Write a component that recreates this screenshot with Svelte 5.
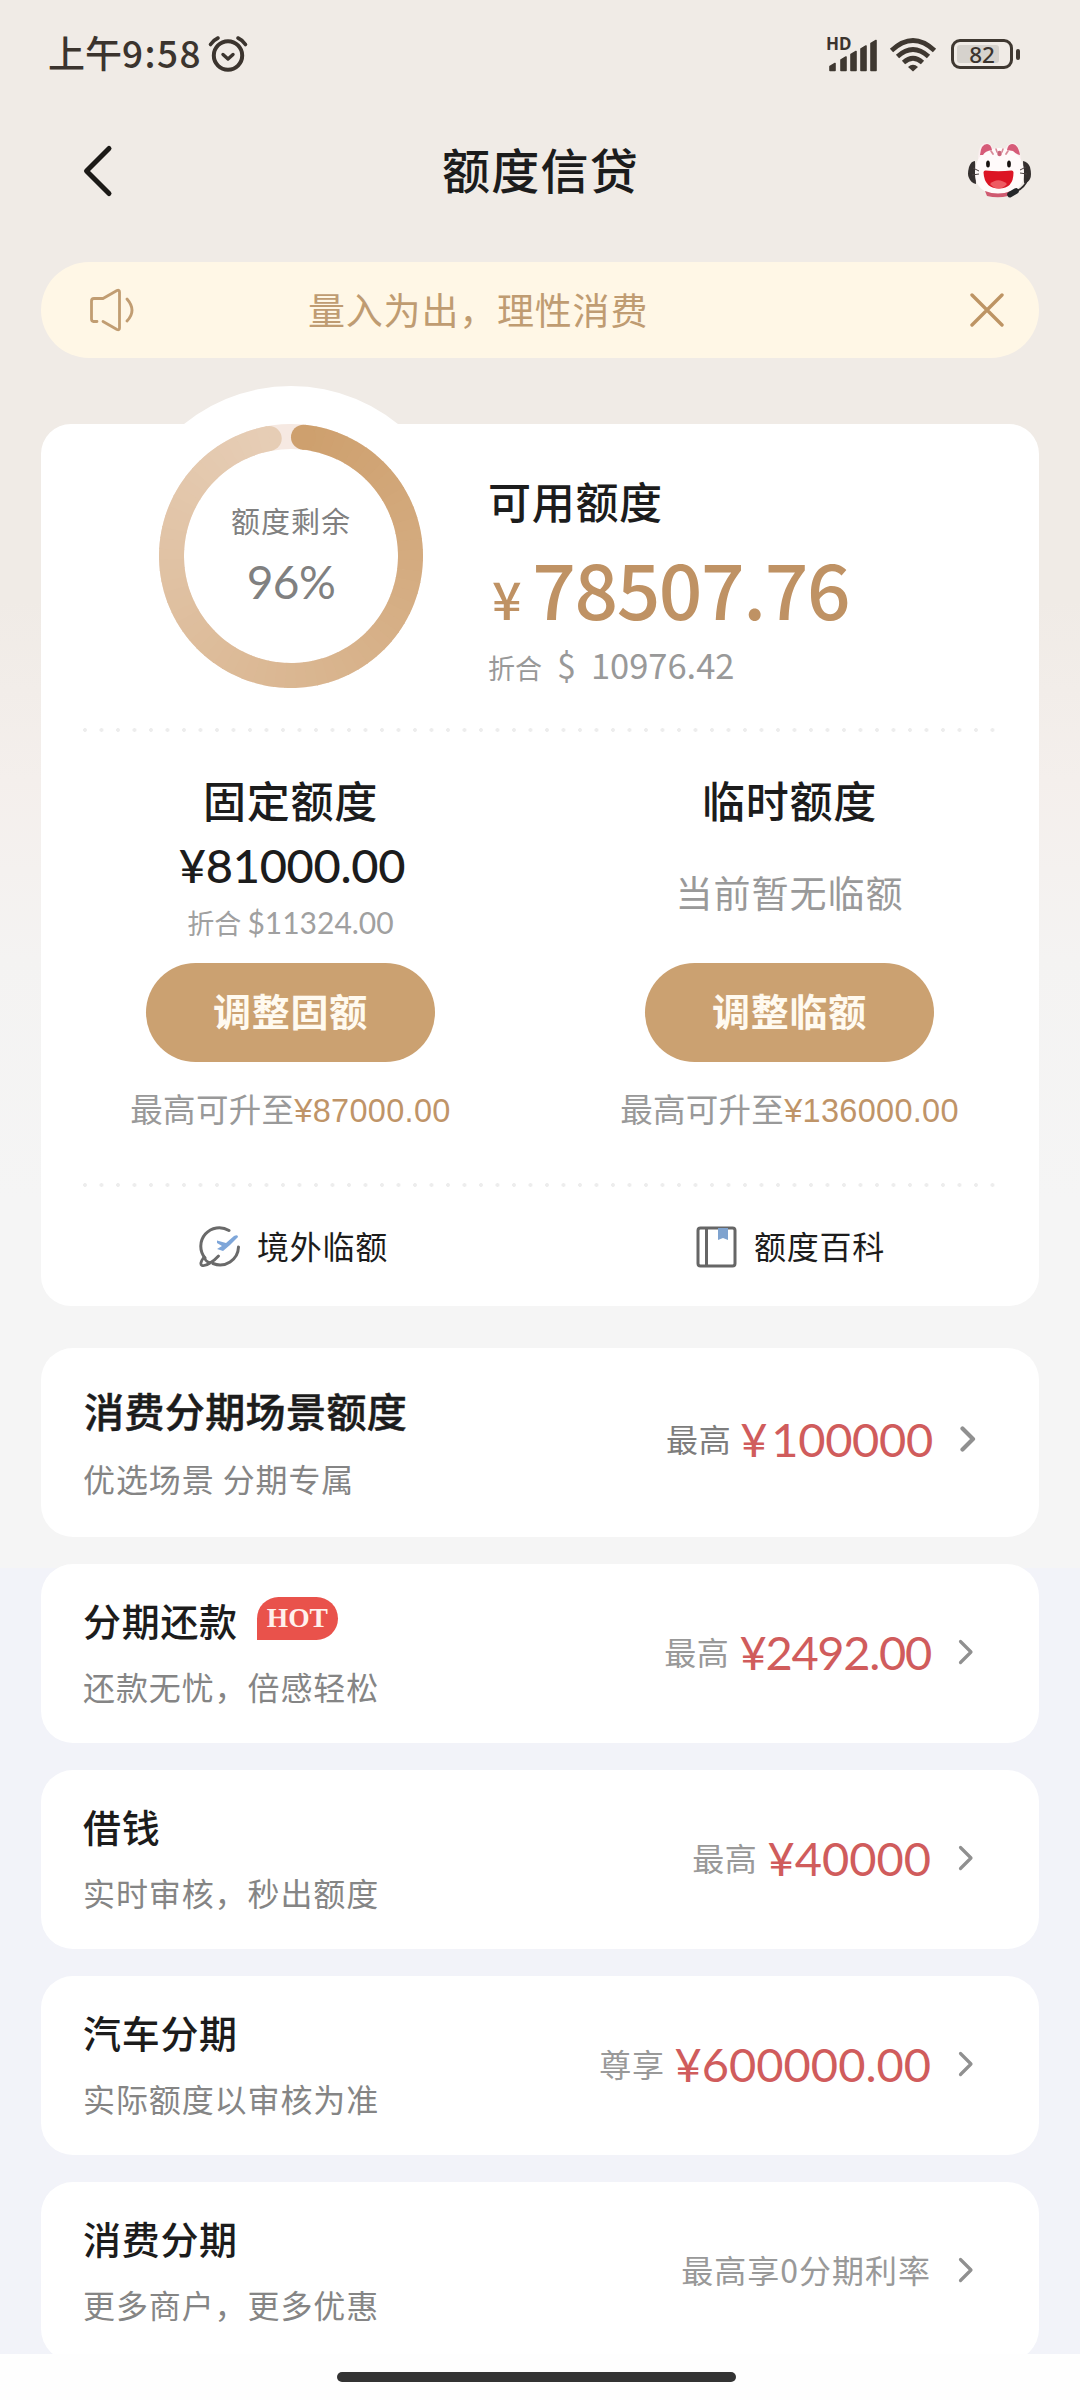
<script lang="ts">
	type Offer = {
		title: string;
		subtitle: string;
		prefix?: string;
		sign?: string;
		amount?: string;
		note?: string;
		hot?: boolean;
		featured?: boolean;
	};

	const offers: Offer[] = [
		{ title: "消费分期场景额度", subtitle: "优选场景 分期专属", prefix: "最高", sign: "¥", amount: "100000", featured: true },
		{ title: "分期还款", subtitle: "还款无忧，倍感轻松", prefix: "最高", sign: "¥", amount: "2492.00", hot: true },
		{ title: "借钱", subtitle: "实时审核，秒出额度", prefix: "最高", sign: "¥", amount: "40000" },
		{ title: "汽车分期", subtitle: "实际额度以审核为准", prefix: "尊享", sign: "¥", amount: "600000.00" },
		{ title: "消费分期", subtitle: "更多商户，更多优惠", note: "最高享0分期利率" },
	];

	const remaining = 96;

	// ring geometry, in degrees clockwise from 12 o'clock
	const CENTER = 132;
	const RADIUS = 119.5;
	const START = 6;
	const END = 349.5;
	const STEPS = 72;
	const FROM = [206, 160, 110];
	const TO = [230, 205, 181];

	function point(angle: number) {
		const rad = (angle * Math.PI) / 180;
		return { x: CENTER + RADIUS * Math.sin(rad), y: CENTER - RADIUS * Math.cos(rad) };
	}

	function shade(t: number): string {
		return `rgb(${FROM.map((c, i) => Math.round(c + (TO[i] - c) * t)).join(",")})`;
	}

	const segments = Array.from({ length: STEPS }, (_, i) => {
		const a = point(START + ((END - START) * i) / STEPS);
		const b = point(Math.min(END, START + ((END - START) * (i + 1)) / STEPS + 0.4));
		return {
			d: `M${a.x.toFixed(2)} ${a.y.toFixed(2)}A${RADIUS} ${RADIUS} 0 0 1 ${b.x.toFixed(2)} ${b.y.toFixed(2)}`,
			color: shade(i / (STEPS - 1)),
		};
	});
	const head = point(START);
	const tail = point(END);
</script>

<div class="screen">
	<header class="status">
		<div class="status-left">
			<span class="clock">上午<span class="time">9:58</span></span>
			<svg class="alarm" width="40" height="38" viewBox="0 0 40 38" fill="none" stroke="#3b342e" stroke-width="4" stroke-linecap="round" stroke-linejoin="round">
				<circle cx="20" cy="20.5" r="14.2" />
				<path d="M15 19.5l5 4.5 5-4.5" stroke-width="3.4" />
				<path d="M2.5 9.5q3-4.5 7.500-6.500M37.500 9.500q-3-4.500-7.500-6.500" stroke-width="3.600" />
			</svg>
		</div>
		<div class="status-right">
			<div class="signal">
				<span class="hd">HD</span>
				<svg width="50" height="36" viewBox="0 0 50 36" fill="#3f3831">
					<path d="M3 34.500v-4l5-3v7zM14 34.500V24l5-3v13.500zM24 34.500V18.500l5-3v19zM34 34.500V13l5-3v24.500zM44 34.500V7.500l5-3v30z" stroke="#3f3831" stroke-width="1.600" stroke-linejoin="round" />
				</svg>
			</div>
			<svg class="wifi" width="48" height="36" viewBox="0 0 48 36" fill="none" stroke="#3f3831" stroke-width="4.800">
				<path d="M2.500 14.500q21.500-20 43 0" />
				<path d="M8.500 20.500q15.500-14 31 0" />
				<path d="M14.500 26.500q9.500-8.500 19 0" />
				<path d="M24 35.500l-5-4.500q5-4.500 10 0z" fill="#3f3831" stroke="none" />
			</svg>
			<div class="battery">
				<div class="battery-body">
					<div class="battery-level"></div>
					<span>82</span>
				</div>
				<i></i>
			</div>
		</div>
	</header>

	<nav class="nav">
		<button type="button" class="back" aria-label="返回">
			<svg width="32" height="54" viewBox="0 0 32 54" fill="none" stroke="#1c1a17" stroke-width="5" stroke-linecap="round" stroke-linejoin="round">
				<path d="M28 4.500L5.500 27 28 49.500" />
			</svg>
		</button>
		<h1>额度信贷</h1>
		<svg class="mascot" width="64" height="58" viewBox="0 0 64 58">
			<path d="M7 19q-4 0-6 6-2 8 0 11 2 5 7 6zM55 19q5 1 7 6 2 8 0 12-2 4-6 4z" fill="#35302f" />
			<path d="M10 19Q10 1 18 1q6 0 7 7h12q2-7 8-7 7 0 8 18z" fill="#fbeff0" />
			<path d="M31 6C15 7 7 17 7 31c0 14 9 21 24 21s25-7 25-21C56 17 47 6 31 6z" fill="#fffafa" />
			<path d="M12 13q1-11 7-11 4 0 5 6-7 1-9 5zM39 8q1-6 5-6 6 0 8 11-3 0-7-4z" fill="#d65b78" />
			<path d="M23 9l2 3M40 9l-2 3" stroke="#d98c9a" stroke-width="1.800" stroke-linecap="round" />
			<path d="M28 7l1 3M35 7l-1 3" stroke="#d98c9a" stroke-width="1.600" stroke-linecap="round" />
			<ellipse cx="31.5" cy="11.5" rx="2.200" ry="2.800" fill="#c9647a" />
			<path d="M17 49q13 5 26 0l-3 5q-10 2.500-21 0z" fill="#cf5a70" />
			<ellipse cx="20" cy="22" rx="1.900" ry="3.500" fill="#17110f" />
			<ellipse cx="41" cy="22" rx="1.900" ry="3.500" fill="#17110f" />
			<path d="M15.500 30.500q0-2 2-2 13 1.500 26 0 2 0 2 2 0 16-14.500 16t-15.500-16z" fill="#dc1424" />
			<path d="M22 42q8-7.500 17 0-4 4.500-8.500 4.500T22 42z" fill="#ee5b62" />
			<path d="M5 26l6 3M4 33l7-1M58 25l-6 3M59 32l-7-1" stroke="#4a4140" stroke-width="1" />
			<path d="M60 36q-3 10-13 14" fill="none" stroke="#2f2b2c" stroke-width="1.800" />
			<path d="M42 52.500l6-3.500" stroke="#25272a" stroke-width="5.600" stroke-linecap="round" />
		</svg>
	</nav>

	<div class="notice">
		<svg width="46" height="44" viewBox="0 0 46 44" fill="none" stroke="#c19d72" stroke-width="2.800" stroke-linecap="round" stroke-linejoin="round">
			<path d="M8 33.500H4.500Q2.500 33.500 2.500 31V13q0-2.500 2.500-2.500h9L28 2.500q2.500-1 2.500 1.500v36q0 2.500-2.500 1.500L14 33.500" />
			<path d="M38 11q10 11.500 0 22" />
		</svg>
		<p>量入为出，理性消费</p>
		<svg class="close" width="34" height="34" viewBox="0 0 34 34" stroke="#bd9464" stroke-width="3.400" stroke-linecap="round">
			<path d="M2 2l30 30M32 2L2 32" />
		</svg>
	</div>

	<section class="limit-card">
		<div class="overview">
			<div class="gauge">
				<svg width="264" height="264" viewBox="0 0 264 264" fill="none" stroke-width="25">
					<circle cx={CENTER} cy={CENTER} r={RADIUS} stroke="#f6e9e2" />
					<circle cx={tail.x} cy={tail.y} r="12.5" fill={shade(1)} stroke="none" />
					{#each segments as segment}
						<path d={segment.d} stroke={segment.color} />
					{/each}
					<circle cx={head.x} cy={head.y} r="12.5" fill={shade(0)} stroke="none" />
				</svg>
				<div class="gauge-text">
					<span class="gauge-label">额度剩余</span>
					<span class="gauge-value">{remaining}%</span>
				</div>
			</div>
			<div class="available">
				<h2>可用额度</h2>
				<div class="available-amount"><small>¥</small>78507.76</div>
				<div class="available-usd">折合<span class="usd-sign">$</span><span class="usd-value">10976.42</span></div>
			</div>
		</div>

		<div class="dots"></div>

		<div class="columns">
			<div class="column">
				<h2>固定额度</h2>
				<div class="fixed-amount">¥81000.00</div>
				<div class="fixed-usd">折合 <span>$11324.00</span></div>
				<button type="button" class="adjust">调整固额</button>
				<div class="raise">最高可升至<b>¥87000.00</b></div>
			</div>
			<div class="column">
				<h2>临时额度</h2>
				<div class="empty">当前暂无临额</div>
				<button type="button" class="adjust">调整临额</button>
				<div class="raise">最高可升至<b>¥136000.00</b></div>
			</div>
		</div>

		<div class="dots"></div>

		<div class="links">
			<div class="link">
				<svg width="42" height="42" viewBox="0 0 42 42" fill="none" stroke="#6a6a6a" stroke-width="3" stroke-linecap="round" stroke-linejoin="round">
					<path d="M30 4.500A18.500 18.500 0 0 0 6 32M39.500 21A18.500 18.500 0 0 1 14 37.500" />
					<path d="M5 31q-5 7-2 8.500 3 1 8-2.500 5-3 8.500-7M5 31q1 4 6 6" stroke-width="2.800" />
					<path d="M18 14.500l9 2.500 8-7q4-2 4 1l-8 8-7 6-6-2 5-3-5-3z" fill="#7ea6d9" stroke="none" />
				</svg>
				<span>境外临额</span>
			</div>
			<div class="link">
				<svg width="42" height="42" viewBox="0 0 42 42" fill="none" stroke="#666" stroke-width="3">
					<rect x="2" y="2" width="37" height="38" rx="2.500" />
					<path d="M10.500 2v38" />
					<path d="M22 2h10v12l-5-2-5 2z" fill="#7fa3cf" stroke="none" />
				</svg>
				<span>额度百科</span>
			</div>
		</div>
	</section>

	<main class="offers">
		{#each offers as offer}
			<article class="offer" class:featured={offer.featured} class:hot={offer.hot}>
				<div class="offer-info">
					<h3>
						{offer.title}
						{#if offer.hot}<em>HOT</em>{/if}
					</h3>
					<p>{offer.subtitle}</p>
				</div>
				<div class="offer-value">
					{#if offer.amount}
						<span class="prefix">{offer.prefix}</span>
						<strong><span class="sign">{offer.sign}</span>{offer.amount}</strong>
					{:else}
						<span class="note">{offer.note}</span>
					{/if}
					<svg class="chevron" width="16" height="28" viewBox="0 0 16 28" fill="none" stroke-linecap="round" stroke-linejoin="round">
						<path d="M2.500 3.500L13 14 2.500 24.500" />
					</svg>
				</div>
			</article>
		{/each}
	</main>

	<footer class="home"><span></span></footer>
</div>

<style>
	:global(body) {
		margin: 0;
	}

	.screen {
		display: flex;
		flex-direction: column;
		box-sizing: border-box;
		width: 1080px;
		height: 2400px;
		overflow: hidden;
		background: linear-gradient(#f0ebe6 0, #f0ebe6 600px, #f4efec 780px, #f4f3f2 960px, #f5f5f5 1200px, #f5f5f5 1568px, #f2f3f9 1568px);
		font-family: "Noto Sans CJK SC", sans-serif;
		color: #1c1c1c;
	}

	h1,
	h2,
	h3,
	p {
		margin: 0;
		font-weight: 500;
	}

	button {
		padding: 0;
		border: 0;
		background: none;
		font-family: inherit;
	}

	svg {
		display: block;
		flex: none;
	}

	.status {
		display: flex;
		align-items: center;
		justify-content: space-between;
		height: 108px;
		padding: 0 60px 0 48px;
		color: #3b342e;
	}

	.status-left,
	.status-right,
	.battery {
		display: flex;
		align-items: center;
	}

	.clock {
		font-size: 37px;
		font-weight: 500;
		line-height: 50px;
		padding-bottom: 4px;
	}

	.time {
		letter-spacing: 1.4px;
	}

	.alarm {
		margin-left: 6px;
	}

	.signal {
		position: relative;
	}

	.hd {
		position: absolute;
		left: -1px;
		top: -2px;
		font: 700 17px/20px "Noto Sans", sans-serif;
	}

	.wifi {
		margin: 0 14px 0 12px;
	}

	.battery-body {
		display: grid;
		box-sizing: border-box;
		width: 62px;
		height: 30px;
		padding: 3px;
		border: 3px solid #3f3831;
		border-radius: 9px;
	}

	.battery-body > * {
		grid-area: 1 / 1;
	}

	.battery-body span {
		margin-top: -3px;
		height: 26px;
		font: 500 22.500px/26px "Noto Sans", sans-serif;
		text-align: center;
	}

	.battery-level {
		width: 42px;
		height: 18px;
		border-radius: 3px;
		background: #d6d2cd;
	}

	.battery i {
		width: 4px;
		height: 11px;
		margin-left: 3px;
		border-radius: 2px;
		background: #3f3831;
	}

	.nav {
		display: grid;
		grid-template-columns: 1fr auto 1fr;
		align-items: center;
		height: 126px;
		padding: 0 48px 0 81px;
	}

	.back {
		justify-self: start;
	}

	.nav h1 {
		margin: -6px 32px 0 0;
		font-size: 48px;
		line-height: 60px;
		letter-spacing: 1.2px;
	}

	.mascot {
		justify-self: end;
	}

	.notice {
		display: grid;
		grid-template-columns: 80px 1fr 80px;
		align-items: center;
		height: 96px;
		margin: 28px 41px 66px;
		padding: 0 35px 0 48px;
		box-sizing: border-box;
		border-radius: 48px;
		background: #fff7e6;
	}

	.notice p {
		margin: -3px 0 0 139px;
		color: #bf9c72;
		font-size: 37px;
		font-weight: 400;
		line-height: 50px;
		letter-spacing: 0.8px;
	}

	.close {
		justify-self: end;
	}

	.limit-card {
		flex: none;
		display: flex;
		flex-direction: column;
		height: 882px;
		margin: 0 41px 42px;
		border-radius: 30px;
		background: #fff;
	}

	.overview {
		display: flex;
		height: 304px;
	}

	/* white halo that rises over the card's top edge */
	.gauge {
		position: relative;
		box-sizing: border-box;
		width: 340px;
		height: 340px;
		margin: -38px 0 0 80px;
		padding: 38px;
		border-radius: 50%;
		background: #fff;
	}

	.gauge-text {
		position: absolute;
		inset: 0;
		display: flex;
		flex-direction: column;
		align-items: center;
		padding-top: 114px;
		color: #808080;
	}

	.gauge-label {
		font-size: 29px;
		line-height: 40px;
		letter-spacing: 1px;
	}

	.gauge-value {
		margin-top: 14px;
		font-family: Lato, sans-serif;
		font-size: 46px;
		line-height: 56px;
		letter-spacing: -0.6px;
	}

	.available {
		padding: 46px 0 0 27px;
	}

	h2 {
		font-size: 43px;
		line-height: 60px;
		letter-spacing: 0.7px;
	}

	.available-amount {
		margin-top: 13px;
		padding-left: 4px;
		color: #bf9264;
		font-size: 76.500px;
		font-weight: 500;
		line-height: 88px;
		letter-spacing: -1.400px;
	}

	.available-amount small {
		margin-right: 12px;
		font-size: 52px;
	}

	.available-usd {
		color: #999;
		font-size: 27px;
		line-height: 44px;
	}

	.usd-sign {
		margin: 0 15px 0 15px;
		font-size: 34px;
	}

	.usd-value {
		font-size: 34.500px;
		letter-spacing: 0;
	}

	.dots {
		height: 4px;
		margin: 0 42px;
		background: radial-gradient(circle at 2px 2px, #ededed 1.6px, transparent 2.2px) 0 0 / 16.500px 4px;
	}

	.columns {
		display: grid;
		grid-template-columns: 1fr 1fr;
		height: 451px;
	}

	.column {
		display: flex;
		flex-direction: column;
		align-items: center;
	}

	.column h2 {
		margin-top: 37px;
	}

	.fixed-amount {
		height: 60px;
		margin: 6px 0 0 3px;
		font-family: Lato, sans-serif;
		font-size: 47px;
		font-weight: 500;
		line-height: 60px;
		letter-spacing: -0.3px;
	}

	.fixed-usd {
		height: 40px;
		margin: 7px 0 21px;
		color: #a0a0a0;
		font-size: 27px;
		line-height: 40px;
	}

	.fixed-usd span {
		font-family: Lato, sans-serif;
		font-size: 30px;
	}

	.empty {
		height: 60px;
		margin: 33px 0 41px;
		color: #999;
		font-size: 37px;
		line-height: 60px;
		letter-spacing: 1px;
	}

	.adjust {
		width: 289px;
		height: 99px;
		padding-bottom: 6px;
		border-radius: 50px;
		background: #cba171;
		color: #fffaf0;
		font-size: 38px;
		font-weight: 700;
		letter-spacing: 0.7px;
	}

	.raise {
		margin-top: 22px;
		color: #999;
		font-size: 32.500px;
		line-height: 48px;
		letter-spacing: 0.3px;
		white-space: nowrap;
	}

	.raise b {
		color: #bf9468;
		font: 32.500px "Liberation Sans", sans-serif;
	}

	.links {
		display: grid;
		grid-template-columns: 1fr 1fr;
		padding: 37px 0 0 4px;
	}

	.link {
		display: flex;
		align-items: center;
		justify-content: center;
		gap: 16px;
		height: 46px;
		font-size: 32px;
		line-height: 46px;
		letter-spacing: 0.7px;
	}

	.link span {
		margin-top: -4px;
	}

	.offers {
		flex: none;
		height: 1006px;
		overflow: hidden;
		padding: 0 41px;
	}

	.offer {
		display: flex;
		justify-content: space-between;
		box-sizing: border-box;
		height: 179px;
		margin-bottom: 27px;
		padding: 27px 65px 0 42px;
		border-radius: 32px;
		background: #fff;
	}

	.offer.featured {
		height: 189px;
		padding-top: 32px;
		padding-right: 63px;
		padding-left: 43px;
	}

	h3 {
		display: flex;
		align-items: center;
		height: 58px;
		font-size: 38px;
		line-height: 58px;
		letter-spacing: 0.7px;
	}

	.featured h3 {
		height: 60px;
		font-size: 40px;
		letter-spacing: 0.4px;
		-webkit-text-stroke: 0.5px currentColor;
	}

	h3 em {
		width: 81px;
		height: 43px;
		margin: -4px 0 0 19px;
		border-radius: 24px 24px 24px 0;
		background: #e9524b;
		color: #fff0ec;
		font: 700 27.500px/41px "Liberation Serif", serif;
		letter-spacing: 0;
		text-align: center;
	}

	.offer-info p {
		margin-top: 14px;
		color: #858585;
		font-size: 32px;
		font-weight: 400;
		line-height: 46px;
		letter-spacing: 0.9px;
	}

	.featured .offer-info p {
		margin-top: 15px;
		margin-left: -1px;
	}

	.offer-value {
		display: flex;
		align-items: center;
		height: 60px;
		margin-top: 31px;
		color: #999;
	}

	.featured .offer-value {
		margin-top: 29px;
	}

	.prefix,
	.note {
		font-size: 32px;
		line-height: 46px;
		padding-bottom: 3px;
		letter-spacing: 0.6px;
	}

	.note {
		letter-spacing: 1px;
	}

	.featured .prefix {
		color: #7d7d7d;
	}

	strong {
		margin-left: 10px;
		color: #d05c5c;
		font-family: Lato, sans-serif;
		font-size: 47px;
		font-weight: 400;
		line-height: 60px;
	}

	.hot strong {
		letter-spacing: -1.300px;
	}

	.featured strong {
		margin-left: 9px;
		letter-spacing: -0.3px;
	}

	.featured .sign {
		margin-right: 4px;
	}

	.chevron {
		margin-left: 27px;
		stroke: #909090;
		stroke-width: 3.200;
	}

	.featured .chevron {
		stroke-width: 4.200;
	}

	.home {
		display: flex;
		flex: 1;
		justify-content: center;
		padding: 18px 7px 0 0;
		background: #fefefe;
	}

	.home span {
		width: 399px;
		height: 10px;
		border-radius: 5px;
		background: #333;
	}
</style>
